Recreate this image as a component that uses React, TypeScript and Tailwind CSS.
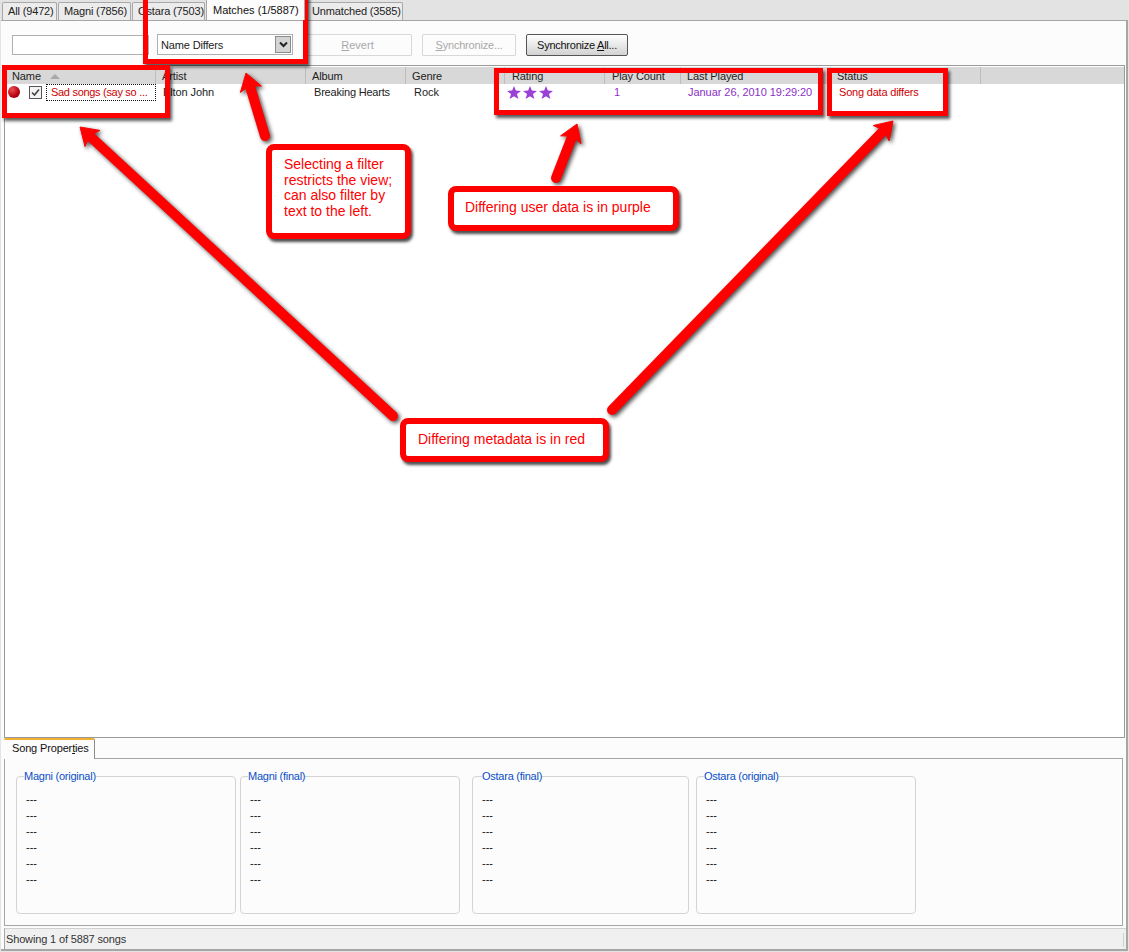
import React from "react";

const Tab = ({ label, active, w }: { label: string; active?: boolean; w: string }) => (
  <div className={active ? `${w} h-[20px] -mb-px z-10 bg-[#fcfcfc] border-x border-[#a8a8a8] flex pl-[6px] pt-[2px] text-[#111] whitespace-nowrap` : `${w} h-[18px] mt-[2px] bg-[#ececec] border border-b-0 border-[#a8a8a8] rounded-t-[2px] flex pl-[5px] items-center tracking-[-0.15px] text-[#222] whitespace-nowrap`}>
    {label}
  </div>
);

const Col = ({ w, label, sort, pl }: { w: string; label: string; sort?: boolean; pl: string }) => (
  <div className={`${w} ${pl} shrink-0 h-full border-r border-[#bdbdbd] pt-[1px] flex items-center text-[#222] tracking-[-0.1px]`}>
    <span>{label}</span>
    {sort && <span className="ml-[9px] w-0 h-0 border-x-[5px] border-x-transparent border-b-[5px] border-b-[#a8a8a8]" />}
  </div>
);

const Star = () => (
  <svg width="14" height="13" viewBox="0 0 15 14"><polygon points="7.5,0 9.5,4.9 15,5.3 10.7,8.6 12.2,14 7.5,11 2.8,14 4.3,8.6 0,5.3 5.5,4.9" fill="#9a3fd8" /></svg>
);

const Group = ({ title, w, legend }: { title: string; w: string; legend: string }) => (
  <div className={`${w} h-[138px] shrink-0 border border-[#d4d4d4] rounded-[4px] relative pl-[9px] pt-[14px]`}>
    <div className={`absolute -top-[7px] ${legend} bg-[#fcfcfc] text-[#0a4fc4] leading-[13px] tracking-[-0.25px]`}>{title}</div>
    {[0, 1, 2, 3, 4, 5].map((i) => (
      <div key={i} className="h-[16px] leading-[16px] text-[#111]">---</div>
    ))}
  </div>
);

const Box = ({ c }: { c: string }) => (
  <div className={`absolute border-[5px] border-[#ff0000] shadow-[2px_3px_3px_rgba(0,0,0,0.65)] ${c}`} />
);

const Callout = ({ c, children }: { c: string; children: React.ReactNode }) => (
  <div className={`absolute bg-white border-[6px] border-[#ff0000] rounded-[8px] shadow-[2px_3px_3px_rgba(0,0,0,0.7)] text-[#ff0000] text-[14px] leading-[15.5px] ${c}`} style={{ fontFamily: '"Liberation Sans", Arial, sans-serif' }}>
    {children}
  </div>
);

const Arrow = ({ x1, y1, x2, y2 }: { x1: number; y1: number; x2: number; y2: number }) => {
  const a = Math.atan2(y2 - y1, x2 - x1);
  const ux = Math.cos(a), uy = Math.sin(a);
  const L = 17, W = 11;
  const bx = x2 - ux * L, by = y2 - uy * L;
  const nx = x2 - ux * (L - 4), ny = y2 - uy * (L - 4);
  const pts = `${x2},${y2} ${bx - uy * W},${by + ux * W} ${nx},${ny} ${bx + uy * W},${by - ux * W}`;
  return (
    <g>
      <line x1={x1} y1={y1} x2={nx} y2={ny} stroke="#ff0000" strokeWidth="10" strokeLinecap="round" />
      <polygon points={pts} fill="#ff0000" stroke="#ff0000" strokeWidth="1" strokeLinejoin="round" />
    </g>
  );
};

export default function App() {
  return (
    <div className="relative w-[1129px] h-[952px] overflow-hidden bg-[#e3e3e3] text-[11px] text-[#222] flex flex-col" style={{ fontFamily: '"Liberation Sans", Arial, sans-serif' }}>
      {/* tabs */}
      <div className="h-[20px] shrink-0 flex pl-[2px] gap-[1px] items-start relative">
        <Tab label="All (9472)" w="w-[55px]" />
        <Tab label="Magni (7856)" w="w-[73px]" />
        <Tab label="Ostara (7503)" w="w-[73px]" />
        <Tab label="Matches (1/5887)" active w="w-[99px]" />
        <Tab label="Unmatched (3585)" w="w-[97px]" />
      </div>

      <div className="flex-1 ml-[1px] mr-[1px] mb-[1px] bg-[#fcfcfc] border-t border-r-2 border-b-2 border-[#a6a6a6] flex flex-col">
        {/* toolbar */}
        <div className="h-[44px] shrink-0 flex items-center pl-[11px] pt-[3px]">
          <div className="w-[137px] h-[20px] bg-white border border-[#b0b0b0]" />
          <div className="ml-[8px] w-[136px] h-[21px] bg-white border border-[#b0b0b0] flex items-center justify-between pl-[3px] pr-[1px] text-[#222] tracking-[-0.15px]">
            <span className="pt-[1px]">Name Differs</span>
            <span className="w-[16px] h-[17px] bg-[#d4d4d4] border border-[#8c8c8c] flex items-center justify-center">
              <svg width="9" height="7" viewBox="0 0 9 7"><path d="M1 1.5 L4.5 5 L8 1.5" fill="none" stroke="#222" strokeWidth="2" /></svg>
            </span>
          </div>
          <div className="ml-[10px] w-[109px] h-[22px] border border-[#d8d8d8] rounded-[1px] flex items-center justify-center text-[#a8a8a8] pt-[1px]"><span><u>R</u>evert</span></div>
          <div className="ml-[10px] w-[94px] h-[22px] border border-[#d8d8d8] rounded-[1px] flex items-center justify-center text-[#a8a8a8] tracking-[-0.2px] pt-[1px]"><span><u>S</u>ynchronize...</span></div>
          <div className="ml-[10px] w-[102px] h-[22px] border border-[#555] rounded-[2px] bg-linear-to-b from-white to-[#d2d2d2] flex items-center justify-center text-[#111] tracking-[-0.25px] pt-[1px]"><span>Synchronize <u>A</u>ll...</span></div>
        </div>

        {/* table */}
        <div className="h-[673px] shrink-0 ml-[3px] mr-[1px] bg-white border border-[#9a9a9a] flex flex-col">
          <div className="h-[17px] mt-[1px] shrink-0 bg-[#d8d8d8] flex">
            <Col w="w-[151px]" pl="pl-[7px]" label="Name" sort />
            <Col w="w-[150px]" pl="pl-[6px]" label="Artist" />
            <Col w="w-[100px]" pl="pl-[6px]" label="Album" />
            <Col w="w-[99px]" pl="pl-[6px]" label="Genre" />
            <Col w="w-[100px]" pl="pl-[7px]" label="Rating" />
            <Col w="w-[76px]" pl="pl-[7px]" label="Play Count" />
            <Col w="w-[150px]" pl="pl-[6px]" label="Last Played" />
            <Col w="w-[150px]" pl="pl-[6px]" label="Status" />
          </div>
          <div className="h-[16px] flex items-center text-[#222]">
            <div className="w-[151px] shrink-0 flex items-center pl-[3px]">
              <span className="w-[12px] h-[12px] rounded-full bg-[radial-gradient(circle_at_35%_30%,#e85050,#b80010_60%,#700008)]" />
              <span className="ml-[9px] w-[13px] h-[13px] border border-[#555] bg-[#f4f4f4] flex items-center justify-center">
                <svg width="9" height="9" viewBox="0 0 9 9"><path d="M1 4.5 L3.5 7 L8 1.5" fill="none" stroke="#444" strokeWidth="1.6" /></svg>
              </span>
              <span className="ml-[4px] w-[110px] h-[17px] shrink-0 border border-dotted border-[#111] text-[#cc0000] pl-[4px] leading-[15px] whitespace-nowrap tracking-[-0.3px]">Sad songs (say so ...</span>
            </div>
            <div className="w-[150px] shrink-0 pl-[7px] tracking-[-0.1px]">Elton John</div>
            <div className="w-[100px] shrink-0 pl-[8px] tracking-[-0.2px]">Breaking Hearts</div>
            <div className="w-[99px] shrink-0 pl-[8px]">Rock</div>
            <div className="w-[100px] shrink-0 flex gap-[2px] pl-[2px]"><Star /><Star /><Star /></div>
            <div className="w-[76px] shrink-0 pl-[9px] text-[#8a2fc8]">1</div>
            <div className="w-[150px] shrink-0 pl-[7px] text-[#8a2fc8] whitespace-nowrap tracking-[-0.05px]">Januar 26, 2010 19:29:20</div>
            <div className="w-[150px] shrink-0 pl-[8px] text-[#cc0000] tracking-[-0.2px]">Song data differs</div>
          </div>
        </div>

        {/* bottom tab */}
        <div className="h-[20px] shrink-0 flex ml-[3px] mr-[3px]">
          <div className="w-[91px] h-[21px] bg-[#fcfcfc] border-r border-[#8c8c8c] border-t-[2px] border-t-[#f0b030] rounded-t-[2px] flex items-center pl-[8px] pb-[2px] text-[#111] z-10 tracking-[-0.15px]">
            <span>Song Proper<u>t</u>ies</span>
          </div>
        </div>
        <div className="h-[168px] shrink-0 ml-[3px] mr-[3px] border border-[#a6a6a6] pt-[17px] pl-[11px] bg-[#fcfcfc] flex">
          <Group title="Magni (original)" w="w-[220px]" legend="left-[7px]" />
          <div className="w-[4px]" />
          <Group title="Magni (final)" w="w-[220px]" legend="left-[7px]" />
          <div className="w-[12px]" />
          <Group title="Ostara (final)" w="w-[217px]" legend="left-[9px]" />
          <div className="w-[7px]" />
          <Group title="Ostara (original)" w="w-[220px]" legend="left-[7px]" />
        </div>
        {/* status */}
        <div className="flex-1 mt-[2px] ml-[3px] bg-[#f0f0f0] border-t border-l border-t-[#d0d0d0] border-l-[#a6a6a6] pl-[1px] pt-[1px] flex items-center justify-between text-[#333] tracking-[-0.15px]">
          <span>Showing 1 of 5887 songs</span>
          <span className="w-[1px] h-[14px] mr-[2px] bg-[#cfcfcf]" />
        </div>
      </div>

      {/* annotations */}
      <svg className="absolute left-0 top-0 drop-shadow-[2px_2px_2px_rgba(0,0,0,0.7)]" width="1129" height="952">
        <Arrow x1={265} y1={136} x2={246} y2={73} />
        <Arrow x1={556} y1={178} x2={577} y2={124} />
        <Arrow x1={393} y1={416} x2={80} y2={127} />
        <Arrow x1={612} y1={410} x2={893} y2={121} />
      </svg>
      <Box c="left-[143px] -top-[6px] w-[165px] h-[70px]" />
      <Box c="left-[2px] top-[65px] w-[168px] h-[53px]" />
      <Box c="left-[494px] top-[68px] w-[329px] h-[47px]" />
      <Box c="left-[827px] top-[68px] w-[121px] h-[48px]" />
      <Callout c="left-[266px] top-[144px] w-[145px] h-[95px] pl-[12px] pt-[7px]">
        Selecting a filter<br />restricts the view;<br />can also filter by<br />text to the left.
      </Callout>
      <Callout c="left-[448px] top-[186px] w-[231px] h-[45px] pl-[11px] pt-[8px]">Differing user data is in purple</Callout>
      <Callout c="left-[400px] top-[418px] w-[209px] h-[44px] pl-[12px] pt-[8px]">Differing metadata is in red</Callout>
    </div>
  );
}
